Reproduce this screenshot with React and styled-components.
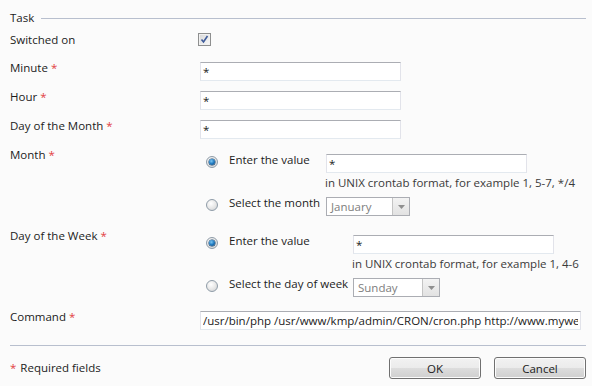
import React from "react";
import styled, { createGlobalStyle } from "styled-components";

const GlobalStyle = createGlobalStyle`
  html, body {
    margin: 0;
    background: #fbfbfb;
  }
  body {
    font-family: "Open Sans", "Noto Sans", sans-serif;
    font-size: 11.5px;
    color: #1b1b1b;
  }
`;

const Form = styled.div`
  width: 592px;
  height: 386px;
  box-sizing: border-box;
  padding: 10px 6px 0 10px;
  display: flex;
  flex-direction: column;
`;

const Legend = styled.div`
  display: flex;
  align-items: center;
  height: 16px;
  line-height: 16px;
  margin-bottom: 6px;
`;

const LegendLine = styled.div`
  flex: 1;
  height: 1px;
  margin-left: 7px;
  background: #b8bfce;
`;

const Rows = styled.div`
  display: flex;
  flex-direction: column;
  gap: 8px;
`;

const Row = styled.div`
  display: grid;
  grid-template-columns: 190px 1fr;
  align-items: start;
  min-height: ${(p) => p.$minHeight || 0}px;
`;

const Label = styled.div`
  line-height: 16px;
  white-space: nowrap;
`;

const Req = styled.span`
  color: #e2403f;
  margin-left: 3px;
`;

const Field = styled.div`
  padding-top: ${(p) => p.$top || 0}px;
  min-width: 0;
`;

const TextBox = styled.input`
  display: block;
  box-sizing: border-box;
  width: ${(p) => p.$width || 201}px;
  height: 19px;
  margin: 0;
  padding: 0 2px;
  border: 1px solid #e2e3ea;
  border-top-color: #abadb3;
  border-bottom-color: #e3e9ef;
  background: #fff;
  font: inherit;
  color: #1b1b1b;
  outline: none;
`;

const CheckBox = styled.span`
  display: block;
  position: relative;
  box-sizing: border-box;
  width: 13px;
  height: 13px;
  margin: 1px 0 0 -2px;
  border: 1px solid #8e8f8f;
  background: linear-gradient(135deg, #d6d6d6, #fafafa);
  box-shadow: inset 0 0 0 1px #f1f1f1;
`;

const Choices = styled.div`
  display: grid;
  grid-template-columns: 29px ${(p) => p.$labelWidth}px auto;
  align-items: start;
  padding-bottom: 4px;
`;

const RadioCell = styled.div`
  padding: 2px 0 0 6px;
  height: 17px;
`;

const Radio = styled.span`
  display: block;
  position: relative;
  box-sizing: border-box;
  width: 12px;
  height: 12px;
  border-radius: 50%;
  border: 1px solid #8f9ca8;
  background: radial-gradient(circle at 40% 35%, #ffffff 0%, #e6e6e6 55%, #c9cdd1 100%);

  &::after {
    content: "";
    display: ${(p) => (p.$checked ? "block" : "none")};
    position: absolute;
    left: 2px;
    top: 2px;
    width: 6px;
    height: 6px;
    border-radius: 50%;
    background: radial-gradient(circle at 40% 35%, #7cc7f3 0%, #1f79bf 50%, #0b3b6b 100%);
    box-shadow: 0 0 0 0.5px #0d3a63;
  }
`;

const ChoiceLabel = styled.div`
  line-height: 16px;
  margin-top: -2px;
  white-space: nowrap;
`;

const Hint = styled.div`
  grid-column: 3;
  line-height: 16px;
  margin: 2px 0 6px -1px;
  color: #3a3a3a;
  white-space: nowrap;
`;

const Select = styled.div`
  display: flex;
  box-sizing: border-box;
  width: ${(p) => p.$width}px;
  height: 19px;
  border: 1px solid #abadb3;
  background: #fff;
`;

const SelectText = styled.span`
  flex: 1;
  line-height: 17px;
  padding-left: 4px;
  color: #7d7d7d;
`;

const SelectArrow = styled.span`
  width: 16px;
  border-left: 1px solid #c4c4c4;
  background: linear-gradient(#f3f3f3, #e2e2e2);
  display: flex;
  align-items: center;
  justify-content: center;
`;

const Divider = styled.div`
  height: 1px;
  background: #b8bfce;
  margin-top: 15px;
`;

const Footer = styled.div`
  display: flex;
  align-items: center;
  margin-top: 11px;
`;

const FooterNote = styled.div`
  flex: 1;
  line-height: 16px;
`;

const Button = styled.button`
  box-sizing: border-box;
  width: 92px;
  height: 22px;
  margin-left: ${(p) => (p.$first ? 0 : 13)}px;
  padding: 0;
  border: 1px solid #707070;
  border-radius: 3px;
  background: linear-gradient(#f2f2f2 0%, #ebebeb 50%, #dddddd 51%, #cfcfcf 100%);
  box-shadow: inset 0 0 0 1px #fcfcfc;
  font: inherit;
  color: #1b1b1b;
`;

function Check() {
  return (
    <CheckBox>
      <svg width="11" height="11" viewBox="0 0 11 11" style={{ position: "absolute", left: 0, top: 0 }}>
        <path d="M2.5 5.5 L4.5 8 L8.5 2" fill="none" stroke="#3e5b9a" strokeWidth="1.6" />
      </svg>
    </CheckBox>
  );
}

function Arrow() {
  return (
    <svg width="7" height="4" viewBox="0 0 7 4">
      <path d="M0 0 H7 L3.5 4 Z" fill="#8f8f8f" />
    </svg>
  );
}

function ChoiceBlock({ labelWidth, selectLabel, selectValue, selectWidth, hint }) {
  return (
    <Choices $labelWidth={labelWidth}>
      <RadioCell>
        <Radio $checked />
      </RadioCell>
      <ChoiceLabel>Enter the value</ChoiceLabel>
      <TextBox defaultValue="*" />
      <Hint>{hint}</Hint>
      <RadioCell>
        <Radio />
      </RadioCell>
      <ChoiceLabel>{selectLabel}</ChoiceLabel>
      <Select $width={selectWidth}>
        <SelectText>{selectValue}</SelectText>
        <SelectArrow>
          <Arrow />
        </SelectArrow>
      </Select>
    </Choices>
  );
}

export default function App() {
  return (
    <>
      <GlobalStyle />
      <Form>
        <Legend>
          Task
          <LegendLine />
        </Legend>
        <Rows>
          <Row $minHeight={20}>
            <Label>Switched on</Label>
            <Field>
              <Check />
            </Field>
          </Row>
          {["Minute", "Hour", "Day of the Month"].map((name) => (
            <Row key={name}>
              <Label>
                {name}
                <Req>*</Req>
              </Label>
              <Field $top={2}>
                <TextBox defaultValue="*" />
              </Field>
            </Row>
          ))}
          <Row>
            <Label>
              Month<Req>*</Req>
            </Label>
            <Field $top={7}>
              <ChoiceBlock
                labelWidth={97}
                selectLabel="Select the month"
                selectValue="January"
                selectWidth={84}
                hint="in UNIX crontab format, for example 1, 5-7, */4"
              />
            </Field>
          </Row>
          <Row>
            <Label>
              Day of the Week<Req>*</Req>
            </Label>
            <Field $top={7}>
              <ChoiceBlock
                labelWidth={124}
                selectLabel="Select the day of week"
                selectValue="Sunday"
                selectWidth={87}
                hint="in UNIX crontab format, for example 1, 4-6"
              />
            </Field>
          </Row>
          <Row>
            <Label>
              Command<Req>*</Req>
            </Label>
            <Field $top={2}>
              <TextBox
                $width={381}
                defaultValue="/usr/bin/php /usr/www/kmp/admin/CRON/cron.php http://www.mywebsite.com/"
              />
            </Field>
          </Row>
        </Rows>
        <Divider />
        <Footer>
          <FooterNote>
            <Req style={{ marginLeft: 0, marginRight: 4 }}>*</Req>
            Required fields
          </FooterNote>
          <Button $first>OK</Button>
          <Button>Cancel</Button>
        </Footer>
      </Form>
    </>
  );
}
